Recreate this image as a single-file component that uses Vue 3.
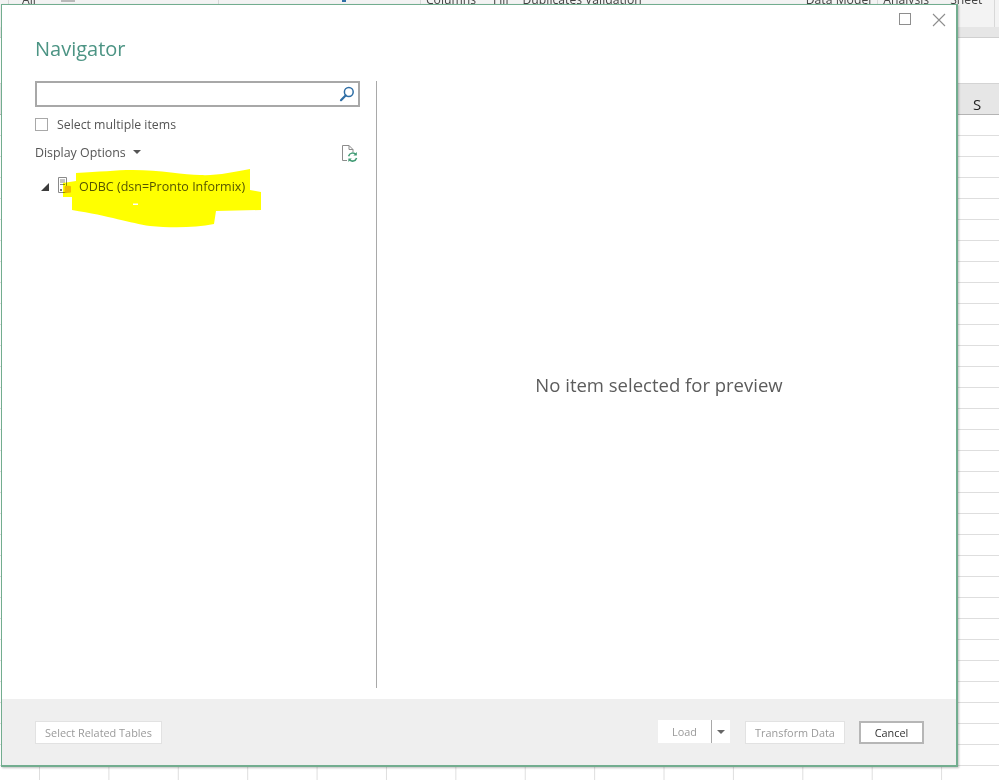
<script setup>
const ribbon = [
  { key: 's1', cls: 'sep s1' },
  { key: 'all', label: 'All', cls: 'r-item r-all' },
  { key: 'ic', cls: 'frag f-grey' },
  { key: 's2', cls: 'sep s2' },
  { key: 'bl', cls: 'frag f-blue' },
  { key: 's3', cls: 'sep s3' },
  { key: 'col', label: 'Columns', cls: 'r-item r-columns' },
  { key: 'fill', label: 'Fill', cls: 'r-item r-fill' },
  { key: 'dup', label: 'Duplicates', cls: 'r-item r-dup' },
  { key: 'val', label: 'Validation', cls: 'r-item r-val' },
  { key: 'mod', label: 'Data Model', cls: 'r-item r-model' },
  { key: 's4', cls: 'sep s4' },
  { key: 'ana', label: 'Analysis', cls: 'r-item r-analysis' },
  { key: 'she', label: 'Sheet', cls: 'r-item r-sheet' },
  { key: 's5', cls: 'sep s5' }
]
</script>

<template>
  <div class="excel">
    <div class="ribbon">
      <span v-for="item in ribbon" :key="item.key" :class="item.cls">{{ item.label }}</span>
    </div>
    <div class="band"></div>
    <div class="formula"></div>
    <div class="col-head"><span class="col-letter">S</span></div>
    <div class="cells"></div>

    <section class="dialog">
      <div class="main">
        <div class="win-controls">
          <span class="win-max"></span>
          <svg class="win-close" width="14" height="14" viewBox="0 0 14 14">
            <path d="M1 1L13 13M13 1L1 13" stroke="#8e8e8e" stroke-width="1.1" fill="none" />
          </svg>
        </div>
        <h1 class="title">Navigator</h1>
        <div class="panes">
          <div class="left">
            <div class="search">
              <svg width="16" height="16" viewBox="0 0 16 16">
                <circle cx="9.8" cy="6" r="4.4" stroke="#2f6ea5" stroke-width="1.5" fill="none" />
                <path d="M6.6 9.4L2 14.2" stroke="#2f6ea5" stroke-width="2.2" stroke-linecap="round" />
              </svg>
            </div>
            <label class="check">
              <span class="box"></span>
              <span>Select multiple items</span>
            </label>
            <div class="options">
              <span class="options-label">Display Options</span>
              <span class="caret"></span>
              <svg class="refresh" width="18" height="19" viewBox="0 0 18 19">
                <path d="M6 16.5H1.5V1.5H8L12 5.5V8M8 1.5V5.5H12" stroke="#8c8c8c" stroke-width="1" fill="none" />
                <path d="M7.6 12.2A4.3 4.3 0 0 1 15 10.5" stroke="#3f9a73" stroke-width="1.5" fill="none" />
                <path d="M15.8 8V11.4H12.4Z" fill="#3f9a73" />
                <path d="M15.6 14A4.3 4.3 0 0 1 8.2 15.6" stroke="#3f9a73" stroke-width="1.5" fill="none" />
                <path d="M7.4 18V14.6H10.8Z" fill="#3f9a73" />
              </svg>
            </div>
            <div class="tree-row">
              <span class="tree-arrow"></span>
              <svg class="server" width="14" height="17" viewBox="0 0 14 17">
                <path d="M.5.5H8.5V15.5H.5Z" stroke="#8a8a8a" fill="#fff" />
                <path d="M2 3H7M2 5H7M2 7.5H7" stroke="#8a8a8a" fill="none" />
                <rect x="2" y="12" width="2" height="2" fill="#777" />
                <path d="M6.5 9.5C6.5 8.4 13 8.4 13 9.5V15C13 16.2 6.5 16.2 6.5 15Z" fill="#eebc10" />
              </svg>
              <span class="tree-label">ODBC (dsn=Pronto Informix)</span>
            </div>
          </div>
          <div class="preview">No item selected for preview</div>
        </div>
      </div>
      <footer class="footer">
        <button class="btn btn-off btn-related">Select Related Tables</button>
        <div class="footer-right">
          <div class="split">
            <span class="split-main">Load</span>
            <span class="split-drop"><i></i></span>
          </div>
          <button class="btn btn-off btn-transform">Transform Data</button>
          <button class="btn btn-cancel">Cancel</button>
        </div>
      </footer>
    </section>

    <svg class="scribble" width="999" height="780" viewBox="0 0 999 780">
      <path
        fill-rule="evenodd"
        d="M76 173C100 172 115 170 133 170C160 170 185 175 200 175C215 176 235 172 250 169L250 190L261 192L261 210L216 211L214 224C195 228 170 228 150 226C130 223 110 216 72 210L72 197L63 197L63 183L76 181ZM133 203.5H138V205H133Z"
        fill="#ffff00"
      />
    </svg>
  </div>
</template>

<style>
html, body { margin: 0; background: #fff; }
</style>

<style scoped>
.excel {
  position: relative;
  width: 999px;
  height: 780px;
  overflow: hidden;
  background: #fff;
  font-family: "Open Sans", "Liberation Sans", sans-serif;
  filter: blur(.3px);
}
.ribbon {
  height: 27px;
  background: #f3f3f3;
  display: flex;
  align-items: flex-start;
  overflow: hidden;
  font-size: 12.2px;
  color: #444;
  line-height: 14px;
}
.sep { width: 1px; height: 27px; background: #d8d8d8; flex: none; }
.frag { flex: none; height: 2px; }
.f-grey { width: 14px; margin-left: 25px; background: #b9b9b9; }
.f-blue { width: 4px; margin-left: 123px; background: #2f6ea5; }
.s1 { margin-left: 8px; }
.s2 { margin-left: 143px; }
.s3 { margin-left: 74px; }
.s4 { margin-left: 6px; }
.s5 { margin-left: 12px; }
.r-item { margin-top: -7px; white-space: nowrap; flex: none; }
.r-all { margin-left: 13px; }
.r-columns { margin-left: 5px; }
.r-fill { margin-left: 17px; }
.r-dup { margin-left: 14px; }
.r-val { margin-left: 3px; }
.r-model { margin-left: 164px; }
.r-analysis { margin-left: 5px; }
.r-sheet { margin-left: 21px; }
.band {
  height: 10px;
  background: #e6e6e6;
  border-bottom: 1px solid #d0d0d0;
}
.formula { height: 45px; background: #fff; }
.col-head {
  height: 30px;
  background: #e6e6e6;
  border-top: 1px solid #d4d4d4;
  border-bottom: 1px solid #b4b4b4;
  display: flex;
  justify-content: flex-end;
  align-items: flex-end;
}
.col-letter {
  width: 43px;
  font-size: 15px;
  line-height: 19px;
  color: #222;
  text-align: left;
  box-sizing: border-box;
  padding-left: 17px;
}
.cells {
  height: 665px;
  background-image:
    linear-gradient(to bottom, transparent 20px, #dedede 20px),
    linear-gradient(to right, transparent 68.4px, #dedede 68.4px);
  background-size: 100% 21px, 69.4px 100%;
  background-position: 0 0, 40px 0;
}
.dialog {
  position: absolute;
  left: 1px;
  top: 4px;
  width: 957px;
  height: 763px;
  box-sizing: border-box;
  border: 1px solid #72ad8f;
  border-right-width: 2px;
  border-bottom-width: 2px;
  box-shadow: 1px 1px 2px rgba(0, 0, 0, .25);
  background: #fff;
  display: flex;
  flex-direction: column;
}
.main { flex: 1; min-height: 0; display: flex; flex-direction: column; padding-left: 33px; }
.win-controls {
  display: flex;
  justify-content: flex-end;
  align-items: flex-start;
  gap: 21px;
  height: 8px;
  padding: 8px 10px 0 0;
}
.win-max {
  width: 12px;
  height: 12px;
  box-sizing: border-box;
  border: 1px solid #8e8e8e;
  flex: none;
}
.win-close { flex: none; }
.title {
  margin: 13px 0 0;
  height: 44px;
  font-size: 20px;
  line-height: 30px;
  font-weight: 400;
  color: #4c9484;
}
.panes { display: flex; height: 607px; margin-top: 3px; }
.left {
  padding-right: 16px;
  width: 325px;
  border-right: 1px solid #a9a9a9;
}
.search {
  height: 26px;
  box-sizing: border-box;
  border: 2px solid #a8a8a8;
  display: flex;
  justify-content: flex-end;
  align-items: center;
  padding-right: 3px;
}
.check {
  display: flex;
  align-items: center;
  gap: 9px;
  margin-top: 10px;
  height: 14px;
  font-size: 12.3px;
  color: #555;
}
.box {
  width: 13px;
  height: 13px;
  box-sizing: border-box;
  border: 1px solid #a8a8a8;
  flex: none;
}
.options {
  display: flex;
  align-items: center;
  height: 20px;
  margin-top: 11px;
  font-size: 12.4px;
  color: #555;
}
.caret {
  margin-left: 7px;
  border-left: 4px solid transparent;
  border-right: 4px solid transparent;
  border-top: 4px solid #555;
  margin-top: -1px;
}
.refresh { margin-left: auto; margin-right: 1px; margin-top: 3px; }
.tree-row {
  display: flex;
  align-items: center;
  height: 18px;
  margin-top: 15px;
  font-size: 12.5px;
  color: #555;
}
.tree-arrow {
  width: 0;
  height: 0;
  margin-left: 6px;
  border-left: 8px solid transparent;
  border-bottom: 8px solid #3c3c3c;
  margin-top: 2px;
}
.server { margin-left: 9px; margin-top: -1px; }
.tree-label { margin-left: 7px; white-space: nowrap; }
.preview {
  flex: 1;
  display: flex;
  align-items: center;
  justify-content: center;
  padding-right: 15px;
  font-size: 18.5px;
  color: #5c5c5c;
}
.footer {
  height: 66px;
  flex: none;
  background: #efefef;
  display: flex;
  align-items: center;
  justify-content: space-between;
  padding: 0 32px 0 33px;
}
.footer-right { display: flex; align-items: center; }
.btn {
  height: 23px;
  box-sizing: border-box;
  font-family: inherit;
  font-size: 10.9px;
  padding: 0;
  background: #fff;
  line-height: 19px;
}
.btn-off { border: 1.5px solid #e2e2e2; color: #9a9a9a; }
.btn-related { width: 127px; }
.split {
  display: flex;
  height: 23px;
  margin-top: -1px;
  background: #fff;
  font-size: 10.9px;
  color: #9a9a9a;
}
.split-main {
  width: 53px;
  border-right: 1px solid #a8a8a8;
  text-align: center;
  line-height: 23px;
}
.split-drop { width: 18px; display: flex; align-items: center; justify-content: center; }
.split-drop i {
  display: block;
  border-left: 4px solid transparent;
  border-right: 4px solid transparent;
  border-top: 4px solid #666;
}
.btn-transform { width: 100px; margin-left: 15px; }
.btn-cancel { width: 65px; margin-left: 14px; border: 2px solid #b6b6b6; color: #333; }
.scribble {
  position: absolute;
  left: 0;
  top: 0;
  mix-blend-mode: multiply;
  pointer-events: none;
}
</style>
